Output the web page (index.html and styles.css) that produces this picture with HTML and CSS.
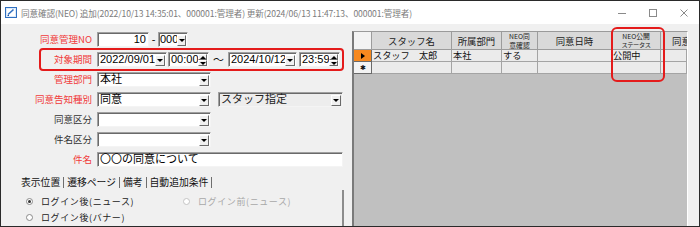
FILE: index.html
```html
<!DOCTYPE html>
<html lang="ja">
<head>
<meta charset="utf-8">
<title>同意確認(NEO)</title>
<link rel="stylesheet" href="styles.css">
</head>
<body>
<div class="window">
  <div class="titlebar">
    <svg class="app-icon" viewBox="0 0 12 11" width="12" height="11">
      <rect x="0.5" y="0.5" width="11" height="10" fill="#dbeafa" stroke="#2f6fc0"/>
      <rect x="2" y="2" width="8" height="7" fill="#fff"/>
      <path d="M3 7.5 L8.5 2.5" stroke="#2f6fc0" stroke-width="1.6"/>
      <path d="M2.5 8.5 L4 8.5" stroke="#1d4f99" stroke-width="1"/>
    </svg>
    <span class="title">同意確認(NEO) 追加(2022/10/13 14:35:01、000001:管理者) 更新(2024/06/13 11:47:13、000001:管理者)</span>
    <div class="winbtns">
      <span class="wb"><svg viewBox="0 0 8 8" width="8" height="8"><path d="M0 4.5 H8" stroke="#8a8a8a" stroke-width="1"/></svg></span>
      <span class="wb"><svg viewBox="0 0 8 8" width="8" height="8"><rect x="0.5" y="0.5" width="7" height="7" fill="none" stroke="#8a8a8a" stroke-width="1"/></svg></span>
      <span class="wb"><svg viewBox="0 0 8 8" width="8" height="8"><path d="M0.5 0.5 L7.5 7.5 M7.5 0.5 L0.5 7.5" stroke="#8a8a8a" stroke-width="1"/></svg></span>
    </div>
  </div>

  <div class="main">
    <div class="left">
      <div class="form">
        <div class="row">
          <span class="lbl req">同意管理NO</span>
          <span class="box num">10</span>
          <span class="dash">-</span>
          <span class="box combo w-no"><span class="val">000</span><span class="dd"></span></span>
        </div>
        <div class="row">
          <span class="lbl req">対象期間</span>
          <span class="box combo w-date"><span class="val">2022/09/01</span><span class="dd"></span></span>
          <span class="box spinbox w-time"><span class="val">00:00</span><span class="spin"><span class="up"></span><span class="down"></span></span></span>
          <span class="tilde">～</span>
          <span class="box combo w-date2"><span class="val">2024/10/12</span><span class="dd"></span></span>
          <span class="box spinbox w-time2"><span class="val">23:59</span><span class="spin"><span class="up"></span><span class="down"></span></span></span>
        </div>
        <div class="row">
          <span class="lbl req">管理部門</span>
          <span class="box combo w-mid"><span class="val">本社</span><span class="dd"></span></span>
        </div>
        <div class="row">
          <span class="lbl req">同意告知種別</span>
          <span class="box combo w-mid"><span class="val">同意</span><span class="dd"></span></span>
          <span class="box combo w-staff disabled"><span class="val">スタッフ指定</span><span class="dd"></span></span>
        </div>
        <div class="row">
          <span class="lbl">同意区分</span>
          <span class="box combo w-mid"><span class="val"></span><span class="dd"></span></span>
        </div>
        <div class="row">
          <span class="lbl">件名区分</span>
          <span class="box combo w-mid"><span class="val"></span><span class="dd"></span></span>
        </div>
        <div class="row">
          <span class="lbl req">件名</span>
          <span class="box w-subject"><span class="val">〇〇の同意について</span></span>
        </div>
      </div>

      <div class="tabs">
        <span class="tab">表示位置</span>
        <span class="tab">遷移ページ</span>
        <span class="tab">備考</span>
        <span class="tab">自動追加条件</span>
      </div>
      <div class="tabpanel">
        <div class="radio-row">
          <span class="radio checked first"><i></i>ログイン後(ニュース)</span>
          <span class="radio disabled"><i></i>ログイン前(ニュース)</span>
        </div>
        <div class="radio-row">
          <span class="radio"><i></i>ログイン後(バナー)</span>
        </div>
      </div>
    </div>

    <div class="gridpane">
      <div class="grid">
        <div class="h corner"></div>
        <div class="h">スタッフ名</div>
        <div class="h">所属部門</div>
        <div class="h small"><span>NEO同<br>意確認</span></div>
        <div class="h">同意日時</div>
        <div class="h small"><span>NEO公開<br><span class="cond">ステータス</span></span></div>
        <div class="h cut">同意区分</div>

        <div class="rh current"><span class="arrow"></span></div>
        <div class="c">スタッフ　太郎</div>
        <div class="c">本社</div>
        <div class="c">する</div>
        <div class="c"></div>
        <div class="c">公開中</div>
        <div class="c"></div>

        <div class="rh newrow">✱</div>
        <div class="c"></div>
        <div class="c"></div>
        <div class="c"></div>
        <div class="c"></div>
        <div class="c"></div>
        <div class="c"></div>
      </div>
    </div>
    <div class="rightstrip"></div>
  </div>

  <div class="annot annot-period"></div>
  <div class="annot annot-status"></div>
</div>
</body>
</html>
```

FILE: styles.css
```css
* { box-sizing: border-box; }
html, body { margin: 0; padding: 0; }
body {
  width: 700px;
  height: 227px;
  overflow: hidden;
  background: #fff;
  font-family: "Noto Sans CJK JP", "Noto Sans", sans-serif;
  color: #111;
}

.window {
  position: relative;
  width: 700px;
  height: 227px;
  border: 1px solid #2a2a2a;
  background: #f0f0f0;
  display: flex;
  flex-direction: column;
  overflow: hidden;
}

/* title bar */
.titlebar {
  flex: none;
  height: 23px;
  background: #fff;
  display: flex;
  align-items: center;
  padding-left: 4px;
}
.app-icon { flex: none; margin-right: 4px; }
.title {
  font-size: 8.6px;
  color: #7c7c7c;
  white-space: nowrap;
  letter-spacing: -0.1px;
  padding-top: 1px;
}
.winbtns { margin-left: auto; display: flex; }
.wb {
  width: 31px;
  height: 23px;
  display: flex;
  align-items: center;
  justify-content: center;
}

/* main area */
.main {
  flex: 1;
  min-height: 0;
  display: flex;
}
.left {
  flex: none;
  width: 351px;
  padding-top: 8px;
  display: flex;
  flex-direction: column;
}

.form { display: flex; flex-direction: column; gap: 5px; }
.row {
  display: flex;
  align-items: center;
  height: 15px;
}
.lbl {
  flex: none;
  width: 91px;
  margin-right: 5px;
  text-align: right;
  font-size: 9.5px;
  line-height: 15px;
  color: #333;
  white-space: nowrap;
}
.lbl.req { color: #f03a3a; }

.box {
  flex: none;
  height: 15px;
  display: flex;
  align-items: center;
  background: #fff;
  border: 1px solid;
  border-color: #a0a0a0 #f4f4f4 #f4f4f4 #a0a0a0;
  box-shadow: inset 1px 1px 0 #6a6a6a;
  font-family: "Liberation Sans", "Noto Sans CJK JP", sans-serif;
  font-size: 11px;
  line-height: 13px;
  color: #000;
  overflow: hidden;
}
.box .val {
  flex: 1;
  min-width: 0;
  padding-left: 2px;
  white-space: nowrap;
}
.box.num { width: 52px; justify-content: flex-end; padding-right: 2px; }
.dash { width: 9px; text-align: center; font-size: 11px; line-height: 15px; font-family: "Liberation Sans", sans-serif; }
.w-no { width: 30px; }
.w-no .val { padding-left: 1px; }
.w-no .dd { width: 9px; }
.w-date { width: 70px; margin-right: 1px; }
.w-time { width: 41px; }
.tilde { width: 19px; text-align: center; font-size: 11px; line-height: 15px; }
.w-date2 { width: 69px; margin-right: 2px; }
.w-time2 { width: 41px; }
.w-mid { width: 114px; }
.w-staff { width: 125px; margin-left: 7px; }
.w-subject { width: 246px; }
.box.disabled { background: #ededed; }
.box.disabled .val { color: #222; }

.dd {
  flex: none;
  width: 10px;
  height: 11px;
  margin: 1px 1px 0 0;
  background: #f0f0f0;
  border: 1px solid;
  border-color: #ffffff #6a6a6a #6a6a6a #ffffff;
  display: flex;
  align-items: center;
  justify-content: center;
}
.dd::before {
  content: "";
  border-top: 3px solid #000;
  border-left: 3px solid transparent;
  border-right: 3px solid transparent;
}

.spin {
  flex: none;
  width: 9px;
  height: 12px;
  margin: 1px 1px 0 0;
  display: flex;
  flex-direction: column;
}
.spin span {
  flex: 1;
  background: #f0f0f0;
  border: 1px solid;
  border-color: #ffffff #6a6a6a #6a6a6a #ffffff;
  display: flex;
  align-items: center;
  justify-content: center;
}
.spin .up::before {
  content: "";
  border-bottom: 3px solid #000;
  border-left: 3px solid transparent;
  border-right: 3px solid transparent;
}
.spin .down::before {
  content: "";
  border-top: 3px solid #000;
  border-left: 3px solid transparent;
  border-right: 3px solid transparent;
}

/* tabs */
.tabs {
  display: flex;
  align-items: center;
  height: 16px;
  margin: 7px 0 0 17px;
}
.tab {
  font-size: 9.8px;
  line-height: 11px;
  padding: 0 3px;
  border-right: 1px solid #6e6e6e;
  color: #111;
  white-space: nowrap;
}
.tabpanel {
  flex: 1;
  margin-left: 17px;
  width: 326px;
  border-right: 2px solid #8c8c8c;
  padding: 3px 0 0 8px;
}
.radio-row { display: flex; height: 16px; align-items: center; }
.radio {
  display: flex;
  align-items: center;
  font-size: 9px;
  letter-spacing: 0.6px;
  color: #222;
  white-space: nowrap;
}
.radio.first { width: 157px; }
.radio i {
  position: relative;
  flex: none;
  width: 7px;
  height: 7px;
  margin-right: 8px;
  border-radius: 50%;
  border: 1px solid #8a8a8a;
  background: #fff;
}
.radio.checked i::after {
  content: "";
  position: absolute;
  left: 1px;
  top: 1px;
  width: 3px;
  height: 3px;
  border-radius: 50%;
  background: #333;
}
.radio.disabled { color: #a8a8a8; }
.radio.disabled i { border-color: #c4c4c4; }

/* grid */
.gridpane {
  flex: none;
  width: 336px;
  margin-top: 7px;
  background: #c0c0c0;
  border-left: 2px solid #7a7a7a;
  border-top: 1px solid #9a9a9a;
  border-right: 1px solid #ffffff;
  overflow: hidden;
}
.grid {
  display: grid;
  grid-template-columns: 18px 80px 50px 36px 74px 49px 26px;
  grid-template-rows: 18px 12px 12px;
}
.h {
  background: #d9d9d9;
  border-right: 1px solid #9c9c9c;
  border-bottom: 1px solid #9c9c9c;
  font-size: 9.4px;
  color: #222;
  display: flex;
  align-items: center;
  justify-content: center;
  text-align: center;
  white-space: nowrap;
  overflow: hidden;
}
.h.small { font-size: 6.8px; line-height: 8.5px; }
.h .cond { display: inline-block; font-size: 6.2px; letter-spacing: -0.4px; }
.h.corner { background: #f3f3f3; }
.h.cut { justify-content: flex-start; padding-left: 11px; border-right: none; }
.c {
  background: #ebebeb;
  border-right: 1px solid #a4a4a4;
  border-bottom: 1px solid #a4a4a4;
  font-size: 9.2px;
  line-height: 11px;
  padding-left: 1px;
  white-space: nowrap;
  color: #111;
}
.rh {
  border-right: 1px solid #6a6a6a;
  border-bottom: 1px solid #6a6a6a;
  display: flex;
  align-items: center;
  justify-content: center;
}
.rh.current { background: #f7891f; }
.rh .arrow {
  border-left: 4px solid #000;
  border-top: 3.5px solid transparent;
  border-bottom: 3.5px solid transparent;
}
.rh.newrow {
  background: #f3f3f3;
  font-size: 7px;
  line-height: 11px;
  color: #111;
}

.rightstrip { flex: 1; background: #f0f0f0; }

/* red annotation outlines drawn over the screenshot */
.annot {
  position: absolute;
  border: 2px solid #e41b1b;
  pointer-events: none;
}
.annot-period { left: 38px; top: 47px; width: 305px; height: 23px; border-radius: 4px; }
.annot-status { left: 610px; top: 26px; width: 54px; height: 55px; border-radius: 6px; }
```
